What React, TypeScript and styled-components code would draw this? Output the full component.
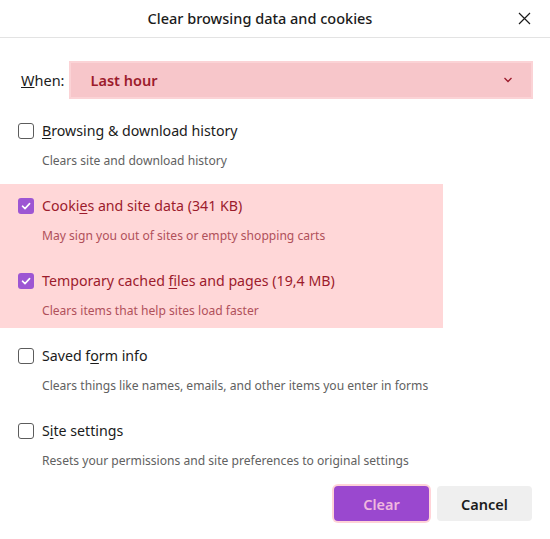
import React from "react";
import styled, { createGlobalStyle } from "styled-components";

const GlobalStyle = createGlobalStyle`
  html, body {
    margin: 0;
    padding: 0;
    background: #ffffff;
  }
  body {
    font-family: "Noto Sans", "Open Sans", sans-serif;
    color: #1b1b1b;
  }
`;

const Dialog = styled.div`
  width: 550px;
  height: 539px;
  display: flex;
  flex-direction: column;
  background: #ffffff;
`;

const Header = styled.div`
  height: 38px;
  box-sizing: border-box;
  display: flex;
  align-items: center;
  justify-content: center;
  position: relative;
  border-bottom: 1px solid #e3e3e3;
  padding-bottom: 1px;
`;

const Title = styled.h1`
  margin: 0 0 0 -30px;
  font-size: 14.5px;
  font-weight: 500;
  color: #1b1b1b;
`;

const CloseButton = styled.button`
  position: absolute;
  right: 19px;
  top: 11px;
  width: 14px;
  height: 14px;
  padding: 0;
  border: none;
  background: none;
  display: flex;
  align-items: center;
  justify-content: center;
`;

const WhenRow = styled.div`
  display: flex;
  align-items: center;
  gap: 4px;
  padding: 23px 17px 0 21px;
`;

const WhenLabel = styled.label`
  font-size: 14.5px;
  color: #1b1b1b;
`;

const Select = styled.div`
  flex: 1;
  height: 38px;
  box-sizing: border-box;
  display: flex;
  align-items: center;
  justify-content: space-between;
  padding: 0 18px 0 20px;
  background: #f7c6ca;
  border: 2px solid #fbd3d6;
  font-size: 14.5px;
  font-weight: 600;
  color: #9c1b2c;
`;

const Options = styled.div`
  display: flex;
  flex-direction: column;
  gap: 6px;
  padding-top: 10px;
`;

const Group = styled.div`
  width: 443px;
  display: flex;
  flex-direction: column;
  gap: 6px;
  background: #ffd7d8;
`;

const Option = styled.div`
  display: grid;
  grid-template-columns: 16px 1fr;
  column-gap: 8px;
  padding: 12px 0 8px 18px;
  height: 69px;
  box-sizing: border-box;
  align-content: start;
`;

const Box = styled.span<{ $checked?: boolean }>`
  width: 16px;
  height: 16px;
  box-sizing: border-box;
  border-radius: 3px;
  margin-top: 2px;
  border: ${({ $checked }) => ($checked ? "none" : "1px solid #5c5c5c")};
  background: ${({ $checked }) => ($checked ? "#9d56d3" : "#ffffff")};
  display: flex;
  align-items: center;
  justify-content: center;
`;

const Label = styled.div<{ $highlight?: boolean }>`
  font-size: 14.2px;
  line-height: 20px;
  color: ${({ $highlight }) => ($highlight ? "#9c1b2c" : "#1b1b1b")};

  u {
    text-decoration-thickness: 1px;
    text-underline-offset: 2px;
  }
`;

const Description = styled.div<{ $highlight?: boolean }>`
  grid-column: 2;
  font-size: 12.1px;
  line-height: 18px;
  margin-top: 11px;
  color: ${({ $highlight }) => ($highlight ? "#b0505a" : "#616161")};
`;

const Footer = styled.div`
  display: flex;
  justify-content: flex-end;
  gap: 8px;
  padding: 8px 18px 0 0;
`;

const Button = styled.button<{ $primary?: boolean }>`
  width: 95px;
  height: 35px;
  border-radius: 4px;
  font-family: inherit;
  font-size: 14.5px;
  font-weight: 600;
  cursor: pointer;
  border: none;
  background: ${({ $primary }) => ($primary ? "#9a48cf" : "#efefef")};
  color: ${({ $primary }) => ($primary ? "#f0b8de" : "#1b1b1b")};
  box-shadow: ${({ $primary }) => ($primary ? "0 0 0 2px #ffd3d8" : "none")};
`;

const Check = () => (
  <svg width="12" height="12" viewBox="0 0 12 12">
    <path d="M2.5 6.2 L5 8.6 L9.6 3.6" fill="none" stroke="#ffffff" strokeWidth="1.6" strokeLinecap="round" strokeLinejoin="round" />
  </svg>
);

type Item = {
  label: React.ReactNode;
  description: string;
  checked?: boolean;
};

const plain: Item[] = [
  {
    label: <><u>B</u>rowsing &amp; download history</>,
    description: "Clears site and download history",
  },
];

const selected: Item[] = [
  {
    label: <>Cooki<u>e</u>s and site data (341 KB)</>,
    description: "May sign you out of sites or empty shopping carts",
    checked: true,
  },
  {
    label: <>Temporary cached <u>f</u>iles and pages (19,4 MB)</>,
    description: "Clears items that help sites load faster",
    checked: true,
  },
];

const rest: Item[] = [
  {
    label: <>Saved f<u>o</u>rm info</>,
    description: "Clears things like names, emails, and other items you enter in forms",
  },
  {
    label: <>S<u>i</u>te settings</>,
    description: "Resets your permissions and site preferences to original settings",
  },
];

const OptionRow = ({ item, highlight }: { item: Item; highlight?: boolean }) => (
  <Option>
    <Box $checked={item.checked}>{item.checked && <Check />}</Box>
    <Label $highlight={highlight}>{item.label}</Label>
    <Description $highlight={highlight}>{item.description}</Description>
  </Option>
);

export default function App() {
  return (
    <>
      <GlobalStyle />
      <Dialog>
        <Header>
          <Title>Clear browsing data and cookies</Title>
          <CloseButton aria-label="Close">
            <svg width="13" height="13" viewBox="0 0 13 13">
              <path d="M1 1 L12 12 M12 1 L1 12" stroke="#1b1b1b" strokeWidth="1.2" />
            </svg>
          </CloseButton>
        </Header>

        <WhenRow>
          <WhenLabel><u>W</u>hen:</WhenLabel>
          <Select>
            <span>Last hour</span>
            <svg width="10" height="6" viewBox="0 0 10 6">
              <path d="M1.5 1 L5 4.5 L8.5 1" fill="none" stroke="#9c1b2c" strokeWidth="1.3" />
            </svg>
          </Select>
        </WhenRow>

        <Options>
          {plain.map((item, i) => (
            <OptionRow key={i} item={item} />
          ))}
          <Group>
            {selected.map((item, i) => (
              <OptionRow key={i} item={item} highlight />
            ))}
          </Group>
          {rest.map((item, i) => (
            <OptionRow key={i} item={item} />
          ))}
        </Options>

        <Footer>
          <Button $primary>Clear</Button>
          <Button>Cancel</Button>
        </Footer>
      </Dialog>
    </>
  );
}
